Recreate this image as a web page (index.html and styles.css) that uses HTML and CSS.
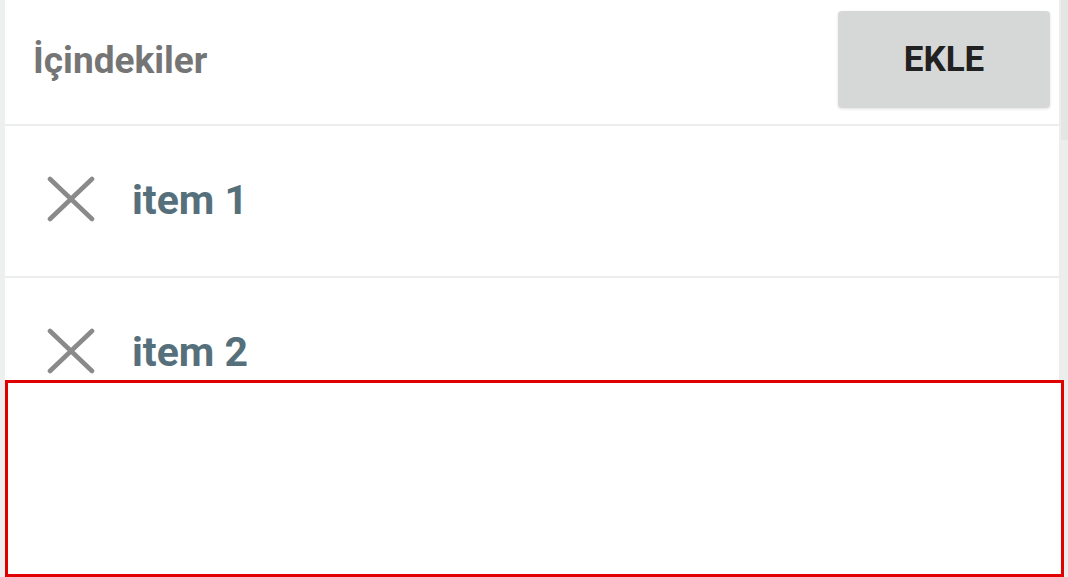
FILE: index.html
```html
<!DOCTYPE html>
<html>
<head>
<meta charset="utf-8">
<link rel="stylesheet" href="styles.css">
</head>
<body>
<div class="page">
  <div class="panel">
    <div class="header">
      <div class="title">İçindekiler</div>
      <button class="add-btn">EKLE</button>
    </div>
    <div class="item">
      <svg class="x-icon" viewBox="0 0 48 46" width="48" height="46"><path d="M3 3 L45 43 M45 3 L3 43" stroke="#8a8a8a" stroke-width="4.6" stroke-linecap="round" fill="none"/></svg>
      <span class="item-text">item 1</span>
    </div>
    <div class="item">
      <svg class="x-icon" viewBox="0 0 48 46" width="48" height="46"><path d="M3 3 L45 43 M45 3 L3 43" stroke="#8a8a8a" stroke-width="4.6" stroke-linecap="round" fill="none"/></svg>
      <span class="item-text">item 2</span>
    </div>
  </div>
  <div class="scrollbar"><div class="thumb"></div></div>
  <div class="highlight"></div>
</div>
</body>
</html>
```
FILE: styles.css
```css
html, body {
  margin: 0;
  padding: 0;
  height: 100%;
  overflow: hidden;
}
body {
  background: #eef0f0;
  font-family: Roboto, "Liberation Sans", sans-serif;
}
.page {
  position: relative;
  display: flex;
  height: 577px;
  padding-left: 5px;
  box-sizing: border-box;
}
.panel {
  width: 1054px;
  background: #ffffff;
  display: flex;
  flex-direction: column;
}
.header {
  height: 124px;
  border-bottom: 2px solid #eceeee;
  display: flex;
  align-items: center;
  justify-content: space-between;
  padding: 0 9px 0 28px;
}
.title {
  font-size: 37px;
  font-weight: 700;
  color: #757575;
  margin-top: -3px;
}
.add-btn {
  width: 212px;
  height: 97px;
  margin-top: -5px;
  border: none;
  border-radius: 4px;
  background: #d6d7d7;
  box-shadow: 0 1px 3px rgba(0,0,0,0.12);
  font-family: Roboto, "Liberation Sans", sans-serif;
  font-size: 35px;
  font-weight: 700;
  color: #212121;
  padding: 0;
}
.item {
  height: 150px;
  flex: none;
  border-bottom: 2px solid #eceeee;
  display: flex;
  align-items: center;
  padding-left: 42px;
  gap: 37px;
}
.x-icon {
  flex: none;
  margin-top: -4px;
}
.item-text {
  font-size: 41px;
  font-weight: 700;
  color: #56707b;
  margin-top: -2px;
}
.scrollbar {
  width: 9px;
  background: #eceeee;
}
.thumb {
  height: 140px;
  margin-left: 2px;
  width: 7px;
  background: #e4e6e6;
}
.highlight {
  position: absolute;
  left: 5px;
  top: 380px;
  width: 1059px;
  height: 197px;
  box-sizing: border-box;
  border: 3px solid #e00000;
  background: #ffffff;
}
```
